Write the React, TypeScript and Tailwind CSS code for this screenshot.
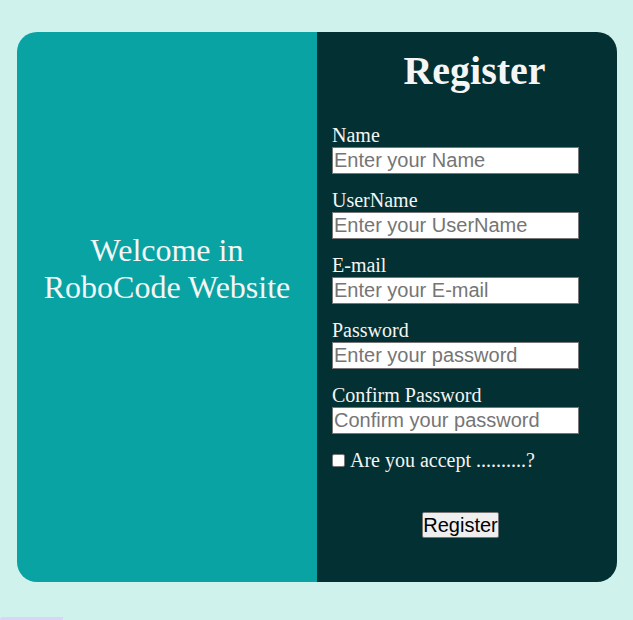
import React from 'react';

const fields = [
  { label: 'Name', placeholder: 'Enter your Name', type: 'text' },
  { label: 'UserName', placeholder: 'Enter your UserName', type: 'text' },
  { label: 'E-mail', placeholder: 'Enter your E-mail', type: 'email' },
  { label: 'Password', placeholder: 'Enter your password', type: 'password' },
  { label: 'Confirm Password', placeholder: 'Confirm your password', type: 'password' },
];

export default function App() {
  return (
    <div className="min-h-[620px] bg-[#cff3ec] pt-[32px] font-['Liberation_Serif',serif] text-[#f5f5f5]">
      <div className="ml-[17px] flex h-[550px] w-[600px] overflow-hidden rounded-[20px]">
        {/* left side */}
        <div className="w-[300px] bg-[#09a3a4] pt-[200px] text-center text-[32px] leading-[37px]">
          <p>Welcome in</p>
          <p>RoboCode Website</p>
        </div>

        {/* register form */}
        <form className="w-[300px] bg-[#033033] pl-[15px] pt-[16px]" onSubmit={(e) => e.preventDefault()}>
          <h1 className="mb-[30px] text-center text-[40px] font-bold leading-[46px]">Register</h1>

          {fields.map((f) => (
            <div key={f.label} className="mb-[15px]">
              <label className="block text-[20px] leading-[23px]">{f.label}</label>
              <input
                type={f.type}
                placeholder={f.placeholder}
                className="block h-[27px] w-[247px] border border-[#767676] bg-white px-[1px] py-[1px] font-['Liberation_Sans',Arial,sans-serif] text-[20px] leading-[23px] text-black placeholder:text-[#757575] outline-none"
              />
            </div>
          ))}

          <div className="flex h-[23px] items-center gap-[5px] text-[20px] leading-[23px]">
            <input
              type="checkbox"
              className="h-[13px] w-[13px] appearance-none rounded-[2px] border border-[#767676] bg-white checked:bg-[#0075ff]"
            />
            <span>Are you accept ..........?</span>
          </div>

          <button
            type="submit"
            className="ml-[90px] mt-[40px] h-[26px] w-[77px] rounded-[2px] border border-[#767676] bg-[#efefef] font-['Liberation_Sans',Arial,sans-serif] text-[20px] leading-[23px] text-black"
          >
            Register
          </button>
        </form>
      </div>
      <div className="mt-[35px] h-[3px] w-[63px] rounded-tl-[3px] bg-[#d8d5f6]" />
    </div>
  );
}
